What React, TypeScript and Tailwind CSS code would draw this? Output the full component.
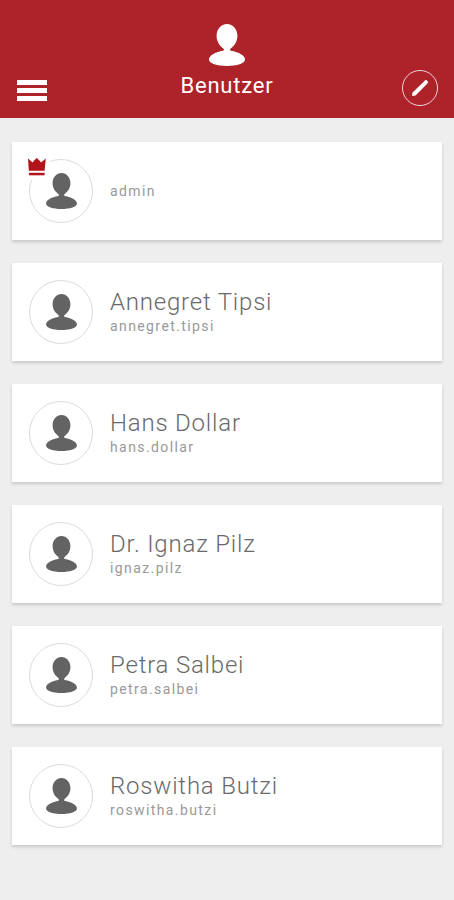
type User = { name?: string; login: string; admin?: boolean };

const users: User[] = [
  { login: "admin", admin: true },
  { name: "Annegret Tipsi", login: "annegret.tipsi" },
  { name: "Hans Dollar", login: "hans.dollar" },
  { name: "Dr. Ignaz Pilz", login: "ignaz.pilz" },
  { name: "Petra Salbei", login: "petra.salbei" },
  { name: "Roswitha Butzi", login: "roswitha.butzi" },
];

function PersonIcon({ className }: { className: string }) {
  return (
    <svg viewBox="0 0 36 42" fill="currentColor" className={className} aria-hidden="true">
      <path d="M18 0C24 0 28.4 5 28.4 12C28.4 17.500 25.500 21.600 22 24.200C20.600 25.200 20.600 26.200 22 26.800C30 28.200 36 31.500 36 35.600C36 39.600 28 42 18 42C8 42 0 39.600 0 35.600C0 31.500 6 28.200 14 26.800C15.400 26.200 15.400 25.200 14 24.200C10.500 21.600 7.600 17.500 7.600 12C7.600 5 12 0 18 0Z" />
    </svg>
  );
}

function CrownIcon() {
  return (
    <svg viewBox="0 0 18 18" fill="currentColor" className="h-[18px] w-[18px] text-[#b3141c]" aria-hidden="true">
      <path d="M0 0.500L4.700 4.500L6 2.500L8.800 0L11.500 2.500L13 4.500L17.800 0.500L16.600 12.800H0.800Z" />
      <path d="M0.900 14.800H16.600V17.300H0.900Z" />
    </svg>
  );
}

function Avatar({ admin }: { admin?: boolean }) {
  return (
    <div className="relative flex h-16 w-16 shrink-0 items-center justify-center rounded-full border border-[#dcdcdc]">
      <PersonIcon className="h-9 w-[31px] text-[#636363]" />
      {admin && (
        <span className="absolute -left-1 -top-1 bg-white pb-1 pl-[2px] pr-1 pt-[2px]">
          <CrownIcon />
        </span>
      )}
    </div>
  );
}

export default function App() {
  return (
    <div className="min-h-screen bg-[#eeeeee] font-['Roboto',sans-serif] tracking-wider">
      <header className="grid grid-cols-[1fr_auto_1fr] items-end bg-[#ad2329] px-4 pb-3 pt-6 text-white">
        <button type="button" aria-label="Menü" className="mb-1 flex h-6 w-8 flex-col justify-center gap-[3px] px-px">
          <span className="h-[5px] w-full bg-white" />
          <span className="h-[5px] w-full bg-white" />
          <span className="h-[5px] w-full bg-white" />
        </button>
        <div className="flex flex-col items-center gap-[6px] pb-[6px]">
          <PersonIcon className="h-[42px] w-9" />
          <h1 className="text-[22px] font-normal leading-7">Benutzer</h1>
        </div>
        <button
          type="button"
          aria-label="Bearbeiten"
          className="flex h-9 w-9 items-center justify-center justify-self-end rounded-full border border-[#f3d5d6]"
        >
          <svg viewBox="0 0 18 18" fill="currentColor" className="h-[18px] w-[18px]" aria-hidden="true">
            <path d="M1 17L1.600 13.600L12.200 3.200L15 6L4.500 16.400Z" />
            <path d="M12 3.500L14.200 1.300C14.600 0.900 15.200 0.900 15.600 1.300L16.800 2.500C17.200 2.900 17.200 3.500 16.800 3.900L14.700 6.200Z" />
          </svg>
        </button>
      </header>
      <main className="px-3 pb-6 pt-6">
        <ul className="flex flex-col gap-[23px]">
          {users.map((user) => (
            <li
              key={user.login}
              className="flex h-[98px] items-center gap-[17px] bg-white px-[17px] shadow-[0_2px_3px_rgba(0,0,0,0.16)]"
            >
              <Avatar admin={user.admin} />
              <div>
                {user.name && <h2 className="text-2xl font-light leading-7 text-[#6a6a6a]">{user.name}</h2>}
                <p className="text-sm leading-5 tracking-widest text-[#999999]">{user.login}</p>
              </div>
            </li>
          ))}
        </ul>
      </main>
    </div>
  );
}
